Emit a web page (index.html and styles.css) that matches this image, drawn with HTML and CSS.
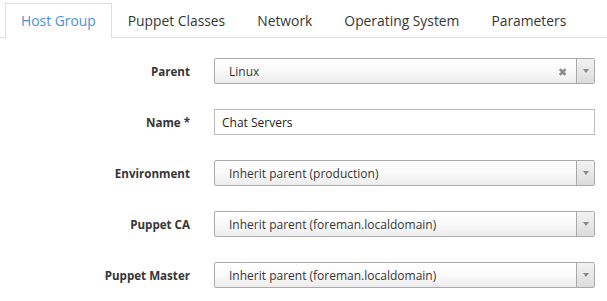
FILE: index.html
```html
<!DOCTYPE html>
<html>
<head>
<meta charset="utf-8">
<link rel="stylesheet" href="styles.css">
</head>
<body>
<ul class="tabs">
  <li class="tab active">Host Group</li>
  <li class="tab">Puppet Classes</li>
  <li class="tab">Network</li>
  <li class="tab">Operating System</li>
  <li class="tab">Parameters</li>
</ul>
<form class="form">
  <label class="label">Parent</label>
  <div class="select">
    <span class="value">Linux</span>
    <span class="clear">&#x2716;</span>
    <span class="arrow"><span class="tri"></span></span>
  </div>

  <label class="label">Name *</label>
  <div class="input">Chat Servers</div>

  <label class="label">Environment</label>
  <div class="select">
    <span class="value">Inherit parent (production)</span>
    <span class="arrow"><span class="tri"></span></span>
  </div>

  <label class="label">Puppet CA</label>
  <div class="select">
    <span class="value">Inherit parent (foreman.localdomain)</span>
    <span class="arrow"><span class="tri"></span></span>
  </div>

  <label class="label">Puppet Master</label>
  <div class="select">
    <span class="value">Inherit parent (foreman.localdomain)</span>
    <span class="arrow"><span class="tri"></span></span>
  </div>
</form>
</body>
</html>
```

FILE: styles.css
```css
* { box-sizing: border-box; }
html, body { margin: 0; padding: 0; background: #fff; }
body {
  font-family: "Open Sans", "Liberation Sans", sans-serif;
  color: #363636;
}
.tabs {
  list-style: none;
  margin: 3px 0 0 0;
  padding: 0 0 0 5px;
  display: flex;
  border-bottom: 1px solid #ddd;
}
.tab {
  font-size: 13.85px;
  line-height: 20px;
  padding: 7px 15px;
  border: 1px solid transparent;
  border-bottom: none;
  margin-bottom: -1px;
  color: #363636;
}
.tab.active {
  color: #4a90d9;
  border-color: #ddd;
  background: #fff;
  height: 35px;
}
.form {
  display: grid;
  grid-template-columns: 190px 381px;
  column-gap: 24px;
  row-gap: 25px;
  margin: 20px 0 0 0;
  align-items: center;
}
.label {
  text-align: right;
  font-size: 11.6px;
  font-weight: bold;
  color: #363636;
}
.select {
  height: 26px;
  border: 1px solid #aaa;
  border-radius: 2px;
  background: linear-gradient(to bottom, #fff 0%, #fafafa 50%, #ececec 100%);
  display: flex;
  align-items: center;
  font-size: 12px;
  color: #363636;
}
.value {
  flex: 1;
  padding-left: 14px;
  white-space: nowrap;
}
.clear {
  font-size: 11px;
  color: #8a8a8a;
  margin-right: 9px;
}
.arrow {
  width: 18px;
  height: 100%;
  border-left: 1px solid #aaa;
  background: linear-gradient(to bottom, #f2f2f2 0%, #dcdcdc 100%);
  display: flex;
  align-items: center;
  justify-content: center;
}
.tri {
  width: 0;
  height: 0;
  border-left: 3px solid transparent;
  border-right: 3px solid transparent;
  border-top: 4px solid #888;
}
.input {
  height: 26px;
  border: 1px solid #bbb;
  padding-left: 7px;
  display: flex;
  align-items: center;
  font-size: 12px;
  color: #222;
}
```
